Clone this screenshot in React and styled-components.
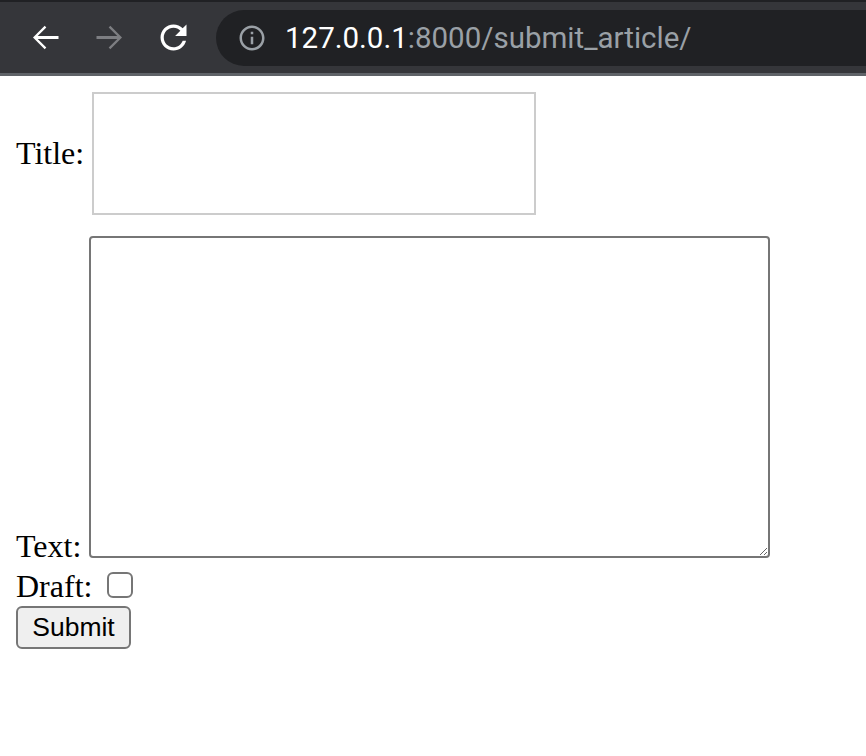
import React, { useState } from 'react';
import styled, { createGlobalStyle } from 'styled-components';

const GlobalStyle = createGlobalStyle`
  html, body {
    margin: 0;
    padding: 0;
    background: #ffffff;
  }
`;

const Chrome = styled.div`
  background: #35363a;
  border-top: 2px solid #202124;
  border-bottom: 3px solid #5f6368;
  height: 71px;
  display: flex;
  align-items: center;
  padding-left: 13px;
  overflow: hidden;
`;

const NavButton = styled.div`
  width: 64px;
  height: 56px;
  display: flex;
  align-items: center;
  justify-content: center;
  color: ${(props) => (props.disabled ? '#7d7e82' : '#ffffff')};
`;

const AddressBar = styled.div`
  flex: 1;
  margin-left: 11px;
  margin-right: -60px;
  height: 56px;
  border-radius: 28px;
  background: #202124;
  display: flex;
  align-items: center;
  padding-left: 21px;
`;

const InfoIcon = styled.div`
  width: 30px;
  height: 30px;
  color: #9aa0a6;
  display: flex;
`;

const Url = styled.span`
  margin-left: 18px;
  font-family: Roboto, "Liberation Sans", sans-serif;
  font-size: 29.5px;
  color: #9aa0a6;
`;

const Host = styled.span`
  color: #ffffff;
`;

const Page = styled.form`
  padding: 16px;
  font-family: "Liberation Serif", "Times New Roman", serif;
  font-size: 32px;
  color: #000000;
`;

const Row = styled.div`
  display: flex;
  align-items: ${(props) => props.align || 'center'};
  margin-top: ${(props) => props.top || 0}px;
`;

const Label = styled.label`
  line-height: ${(props) => props.lh || 'normal'};
  margin-right: ${(props) => props.gap || 8}px;
`;

const TitleInput = styled.input`
  box-sizing: border-box;
  width: 444px;
  height: 123px;
  border: 2px solid #cccccc;
  border-radius: 0;
  padding: 0 6px;
  font-size: 26px;
  outline: none;
`;

const TextArea = styled.textarea`
  box-sizing: border-box;
  width: 681px;
  height: 322px;
  border: 2px solid #767676;
  border-radius: 4px;
  margin: 0;
  font-size: 26px;
  outline: none;
`;

const Check = styled.input`
  appearance: none;
  box-sizing: border-box;
  width: 26px;
  height: 26px;
  margin: 0;
  border: 2px solid #767676;
  border-radius: 6px;
  background: #ffffff;
`;

const SubmitButton = styled.button`
  box-sizing: border-box;
  width: 115px;
  height: 43px;
  padding: 0;
  border: 2px solid #767676;
  border-radius: 6px;
  background: #efefef;
  font-family: "Liberation Sans", Arial, sans-serif;
  font-size: 26.5px;
  color: #000000;
`;

const BackIcon = ({ flip }) => (
  <svg width="39" height="39" viewBox="0 0 24 24" style={flip ? { transform: 'scaleX(-1)' } : undefined}>
    <path fill="currentColor" d="M20 11.1H7.2l5.3-5.3-1-1L4.3 12l7.2 7.2 1-1-5.3-5.3H20v-1.8z" />
  </svg>
);

const ReloadIcon = () => (
  <svg width="39" height="39" viewBox="0 0 24 24">
    <path
      fill="currentColor"
      d="M17.65 6.35C16.2 4.9 14.21 4 12 4c-4.42 0-7.990 3.58-7.99 8s3.57 8 7.99 8c3.73 0 6.84-2.55 7.73-6h-2.08c-.82 2.33-3.04 4-5.650 4-3.31 0-6-2.69-6-6s2.69-6 6-6c1.66 0 3.14.69 4.22 1.78L13 11h7V4l-2.35 2.35z"
    />
  </svg>
);

const Info = () => (
  <svg width="30" height="30" viewBox="0 0 24 24">
    <path
      fill="currentColor"
      d="M11 7h2v2h-2zm0 4h2v6h-2zm1-9C6.48 2 2 6.48 2 12s4.48 10 10 10 10-4.48 10-10S17.52 2 12 2zm0 18c-4.41 0-8-3.59-8-8s3.59-8 8-8 8 3.59 8 8-3.59 8-8 8z"
    />
  </svg>
);

const App = () => {
  const [title, setTitle] = useState('');
  const [text, setText] = useState('');
  const [draft, setDraft] = useState(false);

  return (
    <>
      <GlobalStyle />
      <Chrome>
        <NavButton>
          <BackIcon />
        </NavButton>
        <NavButton disabled>
          <BackIcon flip />
        </NavButton>
        <NavButton>
          <ReloadIcon />
        </NavButton>
        <AddressBar>
          <InfoIcon>
            <Info />
          </InfoIcon>
          <Url>
            <Host>127.0.0.1</Host>:8000/submit_article/
          </Url>
        </AddressBar>
      </Chrome>

      <Page onSubmit={(e) => e.preventDefault()}>
        <Row>
          <Label htmlFor="title">Title:</Label>
          <TitleInput id="title" value={title} onChange={(e) => setTitle(e.target.value)} />
        </Row>
        <Row align="flex-end" top={21}>
          <Label htmlFor="text" lh="24px" gap={8}>Text:</Label>
          <TextArea id="text" value={text} onChange={(e) => setText(e.target.value)} />
        </Row>
        <Row align="flex-end" top={14}>
          <Label htmlFor="draft" lh="24px" gap={15}>Draft:</Label>
          <Check id="draft" type="checkbox" checked={draft} onChange={(e) => setDraft(e.target.checked)} />
        </Row>
        <Row top={8}>
          <SubmitButton type="submit">Submit</SubmitButton>
        </Row>
      </Page>
    </>
  );
};

export default App;
